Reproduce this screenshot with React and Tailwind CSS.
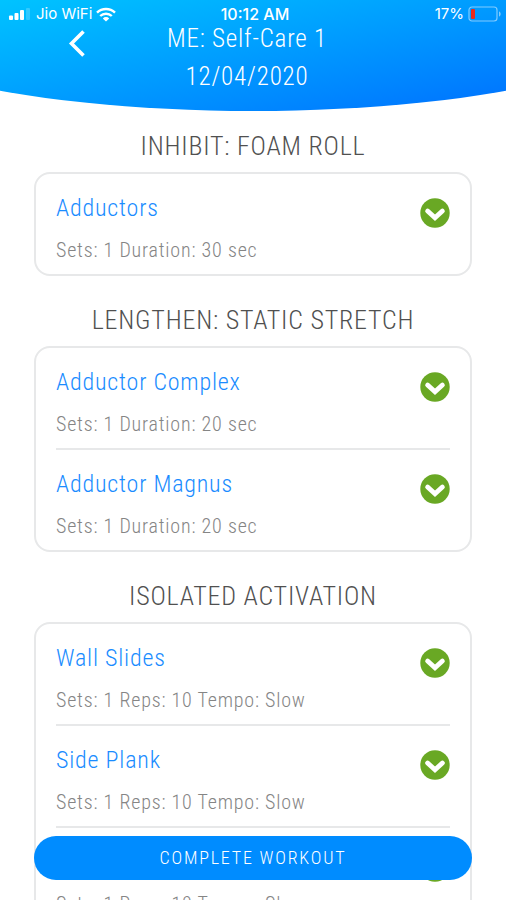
const sections = [
    {
        title: "INHIBIT: FOAM ROLL",
        exercises: [{ name: "Adductors", detail: "Sets: 1 Duration: 30 sec" }],
    },
    {
        title: "LENGTHEN: STATIC STRETCH",
        exercises: [
            { name: "Adductor Complex", detail: "Sets: 1 Duration: 20 sec" },
            { name: "Adductor Magnus", detail: "Sets: 1 Duration: 20 sec" },
        ],
    },
    {
        title: "ISOLATED ACTIVATION",
        exercises: [
            { name: "Wall Slides", detail: "Sets: 1 Reps: 10 Tempo: Slow" },
            { name: "Side Plank", detail: "Sets: 1 Reps: 10 Tempo: Slow" },
            { name: "", detail: "Sets: 1 Reps: 10 Tempo: Slow" },
        ],
    },
];

const SignalIcon = () => (
    <svg viewBox="0 0 24 14" className="w-6 h-3.5" fill="white" aria-hidden="true">
        <rect x="1" y="8.5" width="4" height="4.5" rx="1" />
        <rect x="6.5" y="6" width="4" height="7" rx="1" />
        <rect x="12" y="3" width="4" height="10" rx="1" />
        <rect x="18" y="1" width="4" height="12" rx="1" opacity="0.2" />
    </svg>
);

const WifiIcon = () => (
    <svg viewBox="0 0 20 15" className="w-5 h-[15px]" fill="none" stroke="white" strokeWidth="2.4" aria-hidden="true">
        <path d="M1 5.6a13 13 0 0 1 18 0" />
        <path d="M4.2 9a8.4 8.4 0 0 1 11.6 0" />
        <path d="M10 14.6 6.8 11.4a4.6 4.6 0 0 1 6.4 0Z" fill="white" stroke="none" />
    </svg>
);

const BatteryIcon = () => (
    <svg viewBox="0 0 34 16" className="w-[34px] h-4" fill="none" aria-hidden="true">
        <rect x="1" y="1" width="28" height="14" rx="3" stroke="white" strokeOpacity="0.5" strokeWidth="1.2" />
        <rect x="3" y="3" width="4" height="10" rx="1" fill="#e8291c" />
        <path d="M31 5.5c2.2.6 2.2 4.4 0 5Z" fill="white" fillOpacity="0.5" />
    </svg>
);

const ExpandIcon = () => (
    <svg viewBox="0 0 30 30" className="size-[30px]" aria-hidden="true">
        <circle cx="15" cy="15" r="14.7" fill="#69a824" />
        <path d="M7.6 13 15 19.8 22.4 13" fill="none" stroke="white" strokeWidth="4.8" strokeLinecap="round" />
    </svg>
);

const StatusBar = () => (
    <div className="grid grid-cols-3 items-center h-7 pl-2 pr-1 font-['Inter',sans-serif] text-[15px] font-normal tracking-normal">
        <div className="flex items-center gap-1">
            <SignalIcon />
            <span>Jio WiFi</span>
            <WifiIcon />
        </div>
        <span className="text-center text-base font-medium">10:12 AM</span>
        <div className="flex items-center justify-end gap-1">
            <span>17%</span>
            <BatteryIcon />
        </div>
    </div>
);

const Exercise = ({ name, detail }) => (
    <li className="flex items-start justify-between pt-5 pb-3">
        <div>
            <h3 className="h-7 text-2xl leading-7 text-[#1a8cff]">{name}</h3>
            <p className="mt-4 text-xl leading-6 text-[#858585]">{detail}</p>
        </div>
        <button type="button" aria-label="Show exercise" className="mt-1">
            <ExpandIcon />
        </button>
    </li>
);

const App = () => {
    return (
        <div className="flex flex-col h-screen overflow-hidden bg-white font-light tracking-wider font-['Roboto_Condensed',Roboto,sans-serif]">
            <header className="shrink-0 h-[111px] text-white bg-linear-to-br from-[#00c3ff] to-[#0070ff] [clip-path:ellipse(87%_100%_at_50%_0)]">
                <StatusBar />
                <div className="grid grid-cols-[1fr_auto_1fr] items-start px-16 -mt-2 text-[25px] leading-[38px]">
                    <button type="button" aria-label="Back" className="mt-2 w-6">
                        <svg viewBox="0 0 24 30" className="w-6 h-[30px]" fill="none" stroke="white" strokeWidth="3.6" aria-hidden="true">
                            <path d="M19.5 3.5 7.5 15.5 19.5 27.5" />
                        </svg>
                    </button>
                    <div className="pr-3 text-center">
                        <h1>ME: Self-Care 1</h1>
                        <p>12/04/2020</p>
                    </div>
                </div>
            </header>

            <main className="flex-1 min-h-0 overflow-hidden px-[34px] pt-[15px]">
                {sections.map(({ title, exercises }) => (
                    <section key={title} className="mb-6">
                        <h2 className="pb-1.5 text-center text-[26px] leading-10 text-[#505050]">{title}</h2>
                        <ul className="px-5 border-2 border-[#e7e8e9] rounded-2xl divide-y-2 divide-[#e7e8e9]">
                            {exercises.map((exercise, index) => (
                                <Exercise key={index} {...exercise} />
                            ))}
                        </ul>
                    </section>
                ))}
            </main>

            <div className="fixed inset-x-0 bottom-5 px-[34px]">
                <button type="button" className="w-full h-11 rounded-full bg-[#008cff] text-lg tracking-widest text-white">
                    COMPLETE WORKOUT
                </button>
            </div>
        </div>
    );
};

export default App;
